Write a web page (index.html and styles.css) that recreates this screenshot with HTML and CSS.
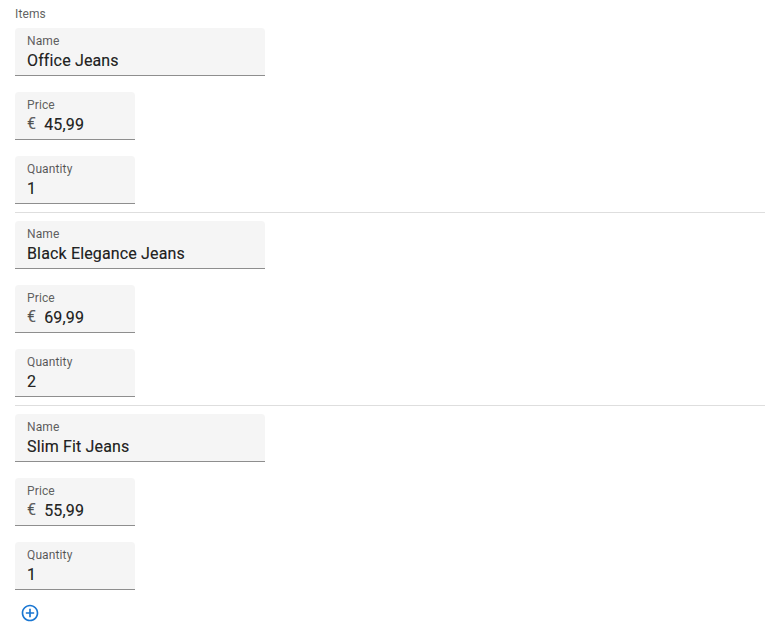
FILE: index.html
```
<!DOCTYPE html>
<html lang="en">
<head>
<meta charset="utf-8">
<title>Items</title>
<link rel="stylesheet" href="styles.css">
</head>
<body>
<main class="items">
  <h1 class="title">Items</h1>
  <section class="item">
    <div class="field wide"><span class="label">Name</span><span class="value">Office Jeans</span></div>
    <div class="field"><span class="label">Price</span><span class="value"><span class="prefix">€</span>45,99</span></div>
    <div class="field"><span class="label">Quantity</span><span class="value">1</span></div>
  </section>
  <section class="item">
    <div class="field wide"><span class="label">Name</span><span class="value">Black Elegance Jeans</span></div>
    <div class="field"><span class="label">Price</span><span class="value"><span class="prefix">€</span>69,99</span></div>
    <div class="field"><span class="label">Quantity</span><span class="value">2</span></div>
  </section>
  <section class="item">
    <div class="field wide"><span class="label">Name</span><span class="value">Slim Fit Jeans</span></div>
    <div class="field"><span class="label">Price</span><span class="value"><span class="prefix">€</span>55,99</span></div>
    <div class="field"><span class="label">Quantity</span><span class="value">1</span></div>
  </section>
  <button class="add" aria-label="Add item">
    <svg width="20" height="20" viewBox="0 0 24 24"><path fill="currentColor" d="M13 7h-2v4H7v2h4v4h2v-4h4v-2h-4V7zm-1-5C6.480 2 2 6.480 2 12s4.480 10 10 10 10-4.480 10-10S17.520 2 12 2zm0 18c-4.410 0-8-3.590-8-8s3.590-8 8-8 8 3.590 8 8-3.590 8-8 8z"/></svg>
  </button>
</main>
</body>
</html>
```
FILE: styles.css
```
* { box-sizing: border-box; }
body {
  margin: 0;
  background: #fff;
  color: rgba(0, 0, 0, 0.87);
  font-family: Roboto, sans-serif;
}
.items { padding: 6px 11px 0 15px; }
.title {
  margin: 0;
  height: 22px;
  font-size: 12px;
  line-height: 16px;
  font-weight: 400;
  letter-spacing: 0.12px;
  -webkit-text-stroke: 0.1px;
  color: rgba(0, 0, 0, 0.62);
}
.item {
  display: flex;
  flex-direction: column;
  gap: 16px;
}
.item + .item {
  margin-top: 8px;
  padding-top: 8px;
  border-top: 1px solid #dedede;
}
.field {
  display: flex;
  flex-direction: column;
  width: 120px;
  height: 48px;
  padding: 5px 12px 0;
  background: #f5f5f5;
  border-bottom: 1px solid #8e8e8e;
  border-radius: 4px 4px 0 0;
}
.wide { width: 250px; }
.label {
  font-size: 12px;
  line-height: 16px;
  letter-spacing: 0.12px;
  -webkit-text-stroke: 0.1px;
  color: rgba(0, 0, 0, 0.62);
}
.value {
  height: 24px;
  font-size: 16px;
  line-height: 24px;
  letter-spacing: 0.15px;
  white-space: nowrap;
  -webkit-text-stroke: 0.2px;
}
.prefix {
  margin-right: 8px;
  line-height: 16px;
  vertical-align: 1px;
  color: rgba(0, 0, 0, 0.6);
}
.add {
  display: flex;
  margin: 13px 0 0 5px;
  padding: 0;
  border: 0;
  background: none;
  color: #1976d2;
}
```
